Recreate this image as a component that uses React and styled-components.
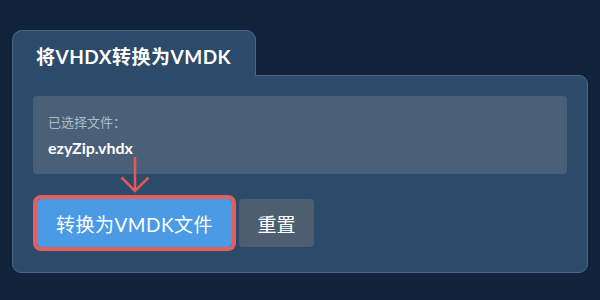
import styled, { createGlobalStyle } from "styled-components"

const GlobalStyle = createGlobalStyle`
    html, body {
        margin: 0;
        padding: 0;
        background-color: #10233a;
    }
    body {
        font-family: "Lato", "Noto Sans CJK SC", sans-serif;
        color: white;
    }
`

const Page = styled.div`
    width: 600px;
    height: 300px;
    box-sizing: border-box;
    padding: 30px 12px 0 12px;
    display: flex;
    flex-direction: column;
`

const Tab = styled.div`
    align-self: flex-start;
    width: 244px;
    height: 46px;
    box-sizing: border-box;
    padding: 0 0 0 23px;
    display: flex;
    align-items: center;
    background-color: #2c4a6a;
    border: 1px solid #4b6788;
    border-bottom: none;
    border-radius: 10px 10px 0 0;
    position: relative;
    z-index: 1;
    margin-bottom: -1px;
`

const Title = styled.h1`
    margin: 0;
    font-size: 19px;
    font-weight: 700;
    padding-top: 3px;
    letter-spacing: 0.5px;
`

const Panel = styled.div`
    width: 576px;
    box-sizing: border-box;
    background-color: #2c4a6a;
    border: 1px solid #4b6788;
    border-radius: 0 9px 9px 9px;
    padding: 20px 20px 25px 20px;
    display: flex;
    flex-direction: column;
    position: relative;
`

const FileBox = styled.div`
    background-color: #4a6079;
    border-radius: 4px;
    height: 78px;
    box-sizing: border-box;
    padding: 16px 15px 0 15px;
    display: flex;
    flex-direction: column;
`

const FileLabel = styled.div`
    font-size: 13px;
    color: #aebbc9;
    line-height: 20px;
`

const FileName = styled.div`
    font-size: 16px;
    font-weight: 700;
    margin-top: 6px;
    line-height: 20px;
`

const ArrowMark = styled.svg`
    position: absolute;
    left: 107px;
    top: 81px;
`

const Buttons = styled.div`
    display: flex;
    gap: 7px;
    padding-left: 4px;
    margin-top: 25px;
`

const Button = styled.button`
    font-family: "Lato", "Noto Sans CJK SC", sans-serif;
    font-size: 19px;
    font-weight: 400;
    letter-spacing: ${(p) => (p.$primary ? "0.5px" : "0")};
    color: white;
    border: none;
    border-radius: 4px;
    height: 48px;
    padding: 0;
    background-color: ${(p) => (p.$primary ? "#4a9ae6" : "#4e5e70")};
    outline: ${(p) => (p.$primary ? "4px solid #e0605e" : "none")};
    width: ${(p) => (p.$primary ? "195px" : "75px")};
`

const Arrow = () => (
    <ArrowMark width="30" height="36" viewBox="0 0 30 36">
        <path d="M15 0 V34 M1.5 20.5 L15 34 L28.5 20.5" stroke="#e05a5a" strokeWidth="2.5" fill="none" />
    </ArrowMark>
)

const App = () => {
    return (
        <>
            <GlobalStyle />
            <Page>
                <Tab>
                    <Title>将VHDX转换为VMDK</Title>
                </Tab>
                <Panel>
                    <FileBox>
                        <FileLabel>已选择文件：</FileLabel>
                        <FileName>ezyZip.vhdx</FileName>
                    </FileBox>
                    <Arrow />
                    <Buttons>
                        <Button $primary>转换为VMDK文件</Button>
                        <Button>重置</Button>
                    </Buttons>
                </Panel>
            </Page>
        </>
    )
}

export default App
